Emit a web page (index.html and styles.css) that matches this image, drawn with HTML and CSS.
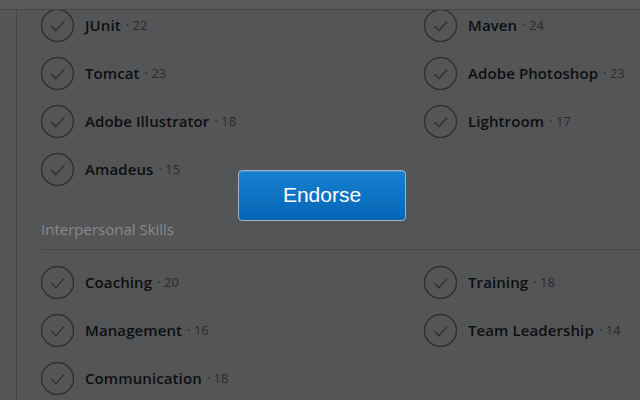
FILE: index.html
```html
<!DOCTYPE html>
<html lang="en">
  <head>
    <meta charset="UTF-8" />
    <title>Skills &amp; Endorsements</title>
    <link rel="stylesheet" href="styles.css">
  </head>
  <body>
    <div class="topbar"></div>
    <div class="layout">
      <div class="rail"></div>
      <div class="content">
        <!-- Tools & Technologies (scrolled) -->
        <ul class="skills">
          <li><span class="check"><svg viewBox="0 0 32 32"><circle cx="16" cy="16" r="15.5"/><path d="M10 16.5l4.5 4.5 8-9"/></svg></span><b>JUnit</b><i>· 22</i></li>
          <li><span class="check"><svg viewBox="0 0 32 32"><circle cx="16" cy="16" r="15.5"/><path d="M10 16.5l4.5 4.5 8-9"/></svg></span><b>Maven</b><i>· 24</i></li>
          <li><span class="check"><svg viewBox="0 0 32 32"><circle cx="16" cy="16" r="15.5"/><path d="M10 16.5l4.5 4.5 8-9"/></svg></span><b>Tomcat</b><i>· 23</i></li>
          <li><span class="check"><svg viewBox="0 0 32 32"><circle cx="16" cy="16" r="15.5"/><path d="M10 16.5l4.5 4.5 8-9"/></svg></span><b>Adobe Photoshop</b><i>· 23</i></li>
          <li><span class="check"><svg viewBox="0 0 32 32"><circle cx="16" cy="16" r="15.5"/><path d="M10 16.5l4.5 4.5 8-9"/></svg></span><b>Adobe Illustrator</b><i>· 18</i></li>
          <li><span class="check"><svg viewBox="0 0 32 32"><circle cx="16" cy="16" r="15.5"/><path d="M10 16.5l4.5 4.5 8-9"/></svg></span><b>Lightroom</b><i>· 17</i></li>
          <li><span class="check"><svg viewBox="0 0 32 32"><circle cx="16" cy="16" r="15.5"/><path d="M10 16.5l4.5 4.5 8-9"/></svg></span><b>Amadeus</b><i>· 15</i></li>
        </ul>

        <h3 class="section">Interpersonal Skills</h3>
        <ul class="skills">
          <li><span class="check"><svg viewBox="0 0 32 32"><circle cx="16" cy="16" r="15.5"/><path d="M10 16.5l4.5 4.5 8-9"/></svg></span><b>Coaching</b><i>· 20</i></li>
          <li><span class="check"><svg viewBox="0 0 32 32"><circle cx="16" cy="16" r="15.5"/><path d="M10 16.5l4.5 4.5 8-9"/></svg></span><b>Training</b><i>· 18</i></li>
          <li><span class="check"><svg viewBox="0 0 32 32"><circle cx="16" cy="16" r="15.5"/><path d="M10 16.5l4.5 4.5 8-9"/></svg></span><b>Management</b><i>· 16</i></li>
          <li><span class="check"><svg viewBox="0 0 32 32"><circle cx="16" cy="16" r="15.5"/><path d="M10 16.5l4.5 4.5 8-9"/></svg></span><b>Team Leadership</b><i>· 14</i></li>
          <li><span class="check"><svg viewBox="0 0 32 32"><circle cx="16" cy="16" r="15.5"/><path d="M10 16.5l4.5 4.5 8-9"/></svg></span><b>Communication</b><i>· 18</i></li>
        </ul>
      </div>
    </div>

    <!-- Overlay button over the dimmed page -->
    <button class="endorse">Endorse</button>
  </body>
</html>
```

FILE: styles.css
```css
/* Dimmed profile page with the endorse button on top */
* {
  margin: 0;
  padding: 0;
  box-sizing: border-box;
}
body {
  background: #545557;
  font-family: "Open Sans", "Noto Sans", sans-serif;
  width: 640px;
  height: 400px;
  overflow: hidden;
  position: relative;
}
.topbar {
  position: absolute;
  left: 0;
  top: 0;
  width: 640px;
  height: 10px;
  background: #59595a;
  border-bottom: 1px solid #464647;
  z-index: 2;
}
.layout {
  display: flex;
  height: 400px;
}
.rail {
  width: 17px;
  flex: none;
  background: #565658;
  border-right: 1px solid #464647;
}
.content {
  flex: 1;
  padding: 1px 0 0 24px;
}
/* Skill list, two columns */
.skills {
  list-style: none;
  display: grid;
  grid-template-columns: 383px 1fr;
}
.skills li {
  height: 48px;
  display: flex;
  align-items: center;
  white-space: nowrap;
}
.check {
  width: 33px;
  height: 33px;
  margin-right: 11px;
  display: flex;
}
.check svg {
  width: 33px;
  height: 33px;
  fill: none;
  stroke: #2f2f31;
  stroke-width: 1.3;
}
.skills b {
  font-weight: 600;
  font-size: 15px;
  color: #0e0e0f;
  letter-spacing: 0.1px;
}
.skills i {
  font-style: normal;
  font-size: 13px;
  color: #2a2a2c;
  margin-left: 5px;
}
.section {
  font-weight: 400;
  font-size: 15px;
  line-height: 20px;
  color: #8a8a8b;
  padding: 26px 0 10px;
  border-bottom: 1px solid #48484a;
  margin-bottom: 8px;
}
/* Modal action */
.endorse {
  position: absolute;
  left: 238px;
  top: 170px;
  width: 168px;
  height: 51px;
  border: 1px solid #a4b2bf;
  border-radius: 4px;
  background: linear-gradient(#1780cf, #0566b6);
  box-shadow: inset 0 1px 0 #3a94d8;
  color: #fff;
  font-family: "Liberation Sans", Arial, sans-serif;
  font-size: 21px;
  padding-bottom: 2px;
}
```
